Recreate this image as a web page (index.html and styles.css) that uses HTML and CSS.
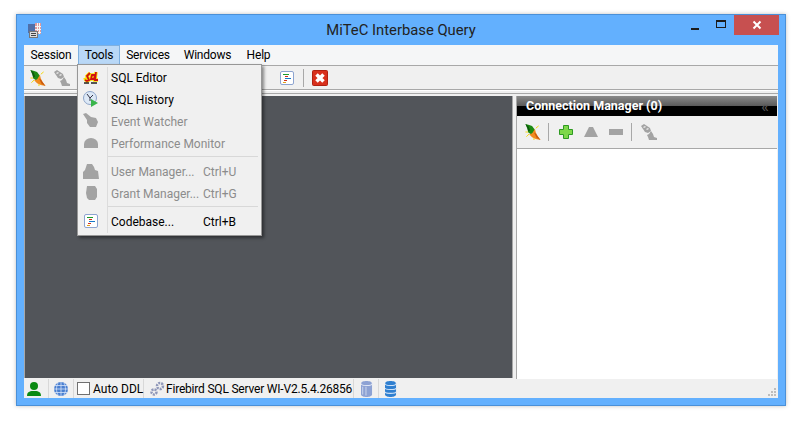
FILE: index.html
```html
<!DOCTYPE html>
<html lang="en">
<head>
<meta charset="utf-8">
<title>MiTeC Interbase Query</title>
<link rel="stylesheet" href="styles.css">
</head>
<body>
<svg class="defs" width="0" height="0" aria-hidden="true">
  <defs>
    <g id="i-plug">
      <path d="M1 13.500l3-3M11 4.500l3-2.500M0 8.500h3M9 15v2" stroke="#f5d800" fill="none"/>
      <path d="M0 0l4 1 3 1 3 4-1 3-3 2-3-2-1-4z" fill="#1c8a12"/>
      <path d="M0 0l3 2 2 5-2 1-1-4z" fill="#0b5a0b"/>
      <path d="M10 5l1 4 2 4 3 4-5-1-4-2-3-3 3-1 2-3z" fill="#f08a1e"/>
      <path d="M9 9l2 1 2 3 3 4-4-2z" fill="#c85a10"/>
    </g>
    <g id="i-gplug" fill="#a3a3a3">
      <path d="M0 2l3-2 6 4 1 3-3 2-3-1z"/>
      <path d="M10 7l2 3 1 3 3 1v2H8l-1-3-1-2 2-1z"/>
      <path d="M2 3l2-1 1 1-2 1zM5 5l2-1 1 1-2 1z" fill="#e8e8e8"/>
    </g>
    <g id="i-doc">
      <rect x="1.500" y="1.500" width="13" height="13" rx="1.500" fill="#fff" stroke="#8da4d0"/>
      <path d="M4 4.500h6" stroke="#1c9a2c"/><path d="M6 6.500h3" stroke="#d03020"/>
      <path d="M6 8.500h6" stroke="#1878c8"/><path d="M5 10.500h3" stroke="#d03020"/><path d="M4 12.500h3" stroke="#e0a020"/>
    </g>
  </defs>
</svg>

<div class="window">
  <header class="titlebar">
    <svg class="app-icon" width="14" height="15" viewBox="0 0 14 15">
      <rect x="0" y="1" width="7" height="9" fill="#4f6fa8"/>
      <rect x="7" y="0" width="6" height="11" fill="#e09a9a"/>
      <path d="M9.500 0v11M11.500 0v11M7 3.500h6M7 6.500h6M7 9.500h6" stroke="#f4f4f4"/>
      <rect x="1.500" y="8.500" width="8" height="6" fill="#ddd" stroke="#777"/>
      <path d="M3 10.500h5M3 12.500h5" stroke="#444"/>
    </svg>
    <div class="title">MiTeC Interbase Query</div>
    <div class="controls">
      <span class="ctl ctl-min"><i></i></span>
      <span class="ctl ctl-max"><i></i></span>
      <span class="ctl ctl-close">
        <svg width="10" height="10" viewBox="0 0 10 10"><path d="M1.500 1.500l7 7M8.500 1.500l-7 7" stroke="#fff" stroke-width="2"/></svg>
      </span>
    </div>
  </header>

  <div class="client">
    <nav class="menubar">
      <span class="menu-item">Session</span>
      <span class="menu-item active">Tools</span>
      <span class="menu-item">Services</span>
      <span class="menu-item">Windows</span>
      <span class="menu-item">Help</span>
    </nav>

    <div class="toolbar">
      <svg class="ico" viewBox="0 0 16 17"><use href="#i-plug"/></svg>
      <svg class="ico" viewBox="0 0 16 16"><use href="#i-gplug"/></svg>
      <span class="tb-spacer"></span>
      <svg class="ico" viewBox="0 0 16 16"><use href="#i-doc"/></svg>
      <span class="sep"></span>
      <svg class="ico" viewBox="0 0 16 16">
        <rect x="0.500" y="0.500" width="15" height="15" rx="1" fill="#d8301c" stroke="#b02010"/>
        <path d="M4.500 4.500l7 7M11.500 4.500l-7 7" stroke="#fff" stroke-width="3.500"/>
      </svg>
    </div>

    <div class="workspace">
      <main class="mdi"></main>
      <aside class="panel">
        <div class="panel-head">
          <span class="panel-title">Connection Manager (0)</span>
          <span class="chev">«</span>
        </div>
        <div class="panel-tools">
          <svg class="ico" viewBox="0 0 16 17"><use href="#i-plug"/></svg>
          <span class="sep"></span>
          <svg class="ico" viewBox="0 0 16 16"><path d="M5.500 1.500h5v4h4v5h-4v4h-5v-4h-4v-5h4z" fill="#7ed84a" stroke="#2e9a22"/></svg>
          <svg class="ico" viewBox="0 0 16 16"><path d="M6 3h4l5 10H1z" fill="#a3a3a3"/></svg>
          <svg class="ico" viewBox="0 0 16 16"><rect x="1" y="5" width="14" height="6" fill="#a3a3a3"/></svg>
          <span class="sep"></span>
          <svg class="ico" viewBox="0 0 16 16"><use href="#i-gplug"/></svg>
        </div>
        <div class="panel-body"></div>
      </aside>
    </div>

    <footer class="statusbar">
      <span class="cell cell-user">
        <svg class="ico" viewBox="0 0 16 16"><circle cx="8" cy="5" r="4" fill="#0a8a12"/><path d="M1 15c0-5 4-5 7-5s7 0 7 5z" fill="#0a8a12"/></svg>
      </span>
      <span class="cell cell-net">
        <svg class="ico" viewBox="0 0 16 16"><circle cx="8" cy="8" r="7" fill="#4a7fd0"/><path d="M1 8h14M2 4.500h12M2 11.500h12M8 1v14M5 2c-2 4-2 8 0 12M11 2c2 4 2 8 0 12" stroke="#d5e3f7" fill="none" stroke-width=".8"/></svg>
      </span>
      <span class="cell cell-ddl"><span class="check"></span>Auto DDL</span>
      <span class="cell cell-server">
        <svg class="ico" viewBox="0 0 16 16"><circle cx="11" cy="5" r="3" fill="none" stroke="#8e96b8" stroke-width="2.500" stroke-dasharray="2 1"/><circle cx="5" cy="11" r="2.500" fill="none" stroke="#8e96b8" stroke-width="2.500" stroke-dasharray="2 1"/></svg>
        <span class="server-name">Firebird SQL Server WI-V2.5.4.26856</span>
      </span>
      <span class="cell cell-db">
        <svg class="ico" viewBox="2 .75 10 14.500" preserveAspectRatio="xMinYMid">
          <path d="M2 3c0-3 10-3 10 0v10c0 3-10 3-10 0z" fill="#8da2d4"/>
          <path d="M2 3c0 2.500 10 2.500 10 0" fill="none" stroke="#dfe6f5"/>
          <path d="M3.500 6v7M6.500 6v8" stroke="#c5d0ea"/>
        </svg>
      </span>
      <span class="cell cell-db last">
        <svg class="ico" viewBox="2 .75 10 14.500" preserveAspectRatio="xMinYMid">
          <path d="M2 3c0-3 10-3 10 0v10c0 3-10 3-10 0z" fill="#2f7fd0"/>
          <path d="M2 3c0 2.500 10 2.500 10 0M2 7c0 2 10 2 10 0M2 10.500c0 2 10 2 10 0" fill="none" stroke="#cfe2f7"/>
        </svg>
      </span>
      <span class="grip">
        <svg width="11" height="8" viewBox="0 0 11 8"><path d="M8 0h2v2H8zM5 3h2v2H5zM8 3h2v2H8zM2 6h2v2H2zM5 6h2v2H5zM8 6h2v2H8z" fill="#bdbdbd"/></svg>
      </span>
    </footer>

    <div class="dropdown">
      <div class="drop-row">
        <svg class="ico" viewBox="0 0 16 16">
          <path d="M1 11l2-1 1 2 2-1-2-4 3-3M8 10l1-4 3 0-1 4zM13 3l-1 8h3" fill="none" stroke="#f8e000" stroke-width="3.500"/>
          <path d="M2 11l2 1 2-1-2-4 3-3M8 10l1-4 3 0-1 4zM13 3l-1 8h3" fill="none" stroke="#d01010" stroke-width="1.800"/>
          <path d="M1 14h5M8 14h6" stroke="#222" stroke-width="1.500"/>
        </svg>
        <span class="drop-label">SQL Editor</span>
      </div>
      <div class="drop-row">
        <svg class="ico" viewBox="0 0 16 16"><circle cx="7" cy="7" r="6.500" fill="#dce8f6" stroke="#8da4c8"/><path d="M4 3l3 4 3-3M7 7v3" stroke="#334" fill="none"/><path d="M8 8l7 4-7 4z" fill="#39b54a"/></svg>
        <span class="drop-label">SQL History</span>
      </div>
      <div class="drop-row off">
        <svg class="ico" viewBox="0 0 16 16"><path d="M0 1l3-1 5 4 5 1 2 4-2 5H7L4 10V7z" fill="#a3a3a3"/></svg>
        <span class="drop-label">Event Watcher</span>
      </div>
      <div class="drop-row off">
        <svg class="ico" viewBox="0 0 16 16"><path d="M1 13V9a7 6 0 0 1 14 0v4z" fill="#a3a3a3"/></svg>
        <span class="drop-label">Performance Monitor</span>
      </div>
      <div class="drop-sep"></div>
      <div class="drop-row off">
        <svg class="ico" viewBox="0 0 16 16"><path d="M4 1h5l2 3 1 3 3 1 1 8H0V9l2-2z" fill="#a3a3a3"/></svg>
        <span class="drop-label">User Manager...</span><span class="drop-key">Ctrl+U</span>
      </div>
      <div class="drop-row off">
        <svg class="ico" viewBox="0 0 16 16"><path d="M4 1h8l2 3v8l-2 3H6l-2-2-1-5z" fill="#a3a3a3"/></svg>
        <span class="drop-label">Grant Manager...</span><span class="drop-key">Ctrl+G</span>
      </div>
      <div class="drop-sep"></div>
      <div class="drop-row">
        <svg class="ico" viewBox="0 0 16 16"><use href="#i-doc"/></svg>
        <span class="drop-label">Codebase...</span><span class="drop-key">Ctrl+B</span>
      </div>
    </div>
  </div>
</div>
</body>
</html>
```
FILE: styles.css
```css
* { box-sizing: border-box; }
html, body { margin: 0; height: 100%; background: #fff; overflow: hidden; }
body {
  padding: 14px 20px 0 16px;
  font-family: Roboto, "Noto Sans", sans-serif;
  font-size: 12px;
  color: #000;
}
.defs { position: absolute; }
.ico { width: 16px; height: 16px; display: block; flex: none; }

.window {
  position: relative;
  width: 770px;
  height: 392px;
  background: #63b0fe;
  border: 1px solid #4a90d8;
  box-shadow: 0 0 4px rgba(0, 0, 0, .25);
  padding: 0 7px 7px 7px;
  display: flex;
  flex-direction: column;
}

.titlebar { height: 30px; flex: none; display: flex; align-items: center; position: relative; }
.app-icon { margin: 0 0 0 4px; flex: none; }
.title {
  position: absolute; left: 0; right: 0; top: 4px;
  text-align: center; font-size: 14.800px; line-height: 22px; color: #222;
}
.controls { margin-left: auto; display: flex; align-self: flex-start; position: relative; margin-right: -1px; }
.ctl { height: 20px; display: flex; align-items: center; justify-content: center; }
.ctl-min { width: 27px; }
.ctl-min i { width: 8px; height: 2px; background: #1c1c1c; margin-top: 8px; display: block; }
.ctl-max { width: 26px; }
.ctl-max i { width: 10px; height: 8px; border: 1px solid #1c1c1c; border-top-width: 2px; display: block; margin-top: -3px; }
.ctl-close { width: 45px; background: #c75050; }

.client {
  position: relative;
  flex: 1;
  min-height: 0;
  background: #f0f0f0;
  display: flex;
  flex-direction: column;
}

.menubar {
  height: 21px; flex: none;
  background: #f5f6f7;
  border-bottom: 1px solid #a8a8a8;
  display: grid;
  grid-template-columns: 54px 42px 56px 63px 39px;
  letter-spacing: -.2px;
}
.menu-item { text-align: center; line-height: 19px; border: 1px solid transparent; border-bottom: 0; }
.menu-item.active { background: #b9d8f7; border: 1px solid #7fb0e0; }

.toolbar {
  height: 24px; flex: none;
  display: flex; align-items: center;
  padding-left: 6px;
  gap: 8px;
  border-bottom: 1px solid #a8a8a8;
}
.tb-spacer { width: 193px; }
.sep { width: 1px; height: 18px; background: #a8a8a8; flex: none; }

.workspace {
  flex: 1; min-height: 0;
  display: flex;
  border-top: 1px solid #fff;
  padding-top: 2px;
  position: relative;
}
.workspace::before {
  content: ""; position: absolute; left: 0; right: 0; top: 2px; height: 1px; background: #a8a8a8;
}
.mdi {
  width: 489px; flex: none; background: #52555a;
  margin: 3px 0 1px; border-left: 1px solid #a8a8a8; border-right: 1px solid #a8a8a8;
}
.panel { flex: 1; display: flex; flex-direction: column; margin: 3px 1px 0 3px; border-left: 1px solid #a8a8a8; }
.panel-head {
  height: 20px; flex: none; color: #fff; font-weight: bold; font-size: 12.500px;
  background: linear-gradient(#8a8a8a 0, #5a5a5a 50%, #000 50%, #000 100%);
  display: flex; align-items: center; padding: 0 8px 0 9px; line-height: 20px;
}
.chev { margin-left: auto; color: #555; font-weight: normal; font-size: 17px; }
.panel-tools {
  height: 33px; flex: none; display: flex; align-items: center;
  padding-left: 8px; gap: 9px;
  border-bottom: 1px solid #a8a8a8;
}
.panel-tools .sep { margin-left: -2px; }
.panel-body { flex: 1; background: #fff; }

.statusbar {
  height: 19px; flex: none;
  background: #f0f0f0;
  display: flex; align-items: center;
  position: relative;
}
.cell { display: flex; align-items: center; height: 100%; border-right: 1px solid #d8d8d8; white-space: nowrap; padding-left: 2px; }
.cell-user { width: 25px; }
.cell-net { width: 25px; padding-left: 4px; }
.cell-ddl { width: 70px; padding-left: 3px; }
.check { width: 13px; height: 13px; background: #fff; border: 1px solid #707070; margin-right: 3px; flex: none; }
.cell-server { width: 210px; gap: 1px; padding-left: 5px; }
.server-name { letter-spacing: -.2px; }
.cell-db { width: 25px; padding-left: 7px; }
.cell-db.last { border-right: 0; padding-left: 6px; }
.grip { width: 11px; height: 8px; margin: 0 1px 2px auto; align-self: flex-end; line-height: 0; }

.dropdown {
  position: absolute;
  left: 53px; top: 19px;
  width: 185px;
  background: #f0f0f0;
  border: 1px solid #979797;
  box-shadow: 2px 2px 3px rgba(0, 0, 0, .45);
  padding: 1px 2px 3px;
  z-index: 5;
}
.dropdown::before {
  content: ""; position: absolute; left: 29px; top: 2px; bottom: 2px; width: 1px; background: #dcdcdc;
}
.drop-row { height: 22px; display: flex; align-items: center; padding-left: 3px; }
.drop-label { margin-left: 12px; width: 92px; white-space: nowrap; flex: none; padding-top: 2px; }
.drop-key { white-space: nowrap; padding-top: 2px; }
.off { color: #8c8c8c; }
.drop-sep { height: 1px; background: #d8d8d8; margin: 2px 1px 3px 28px; }
```
